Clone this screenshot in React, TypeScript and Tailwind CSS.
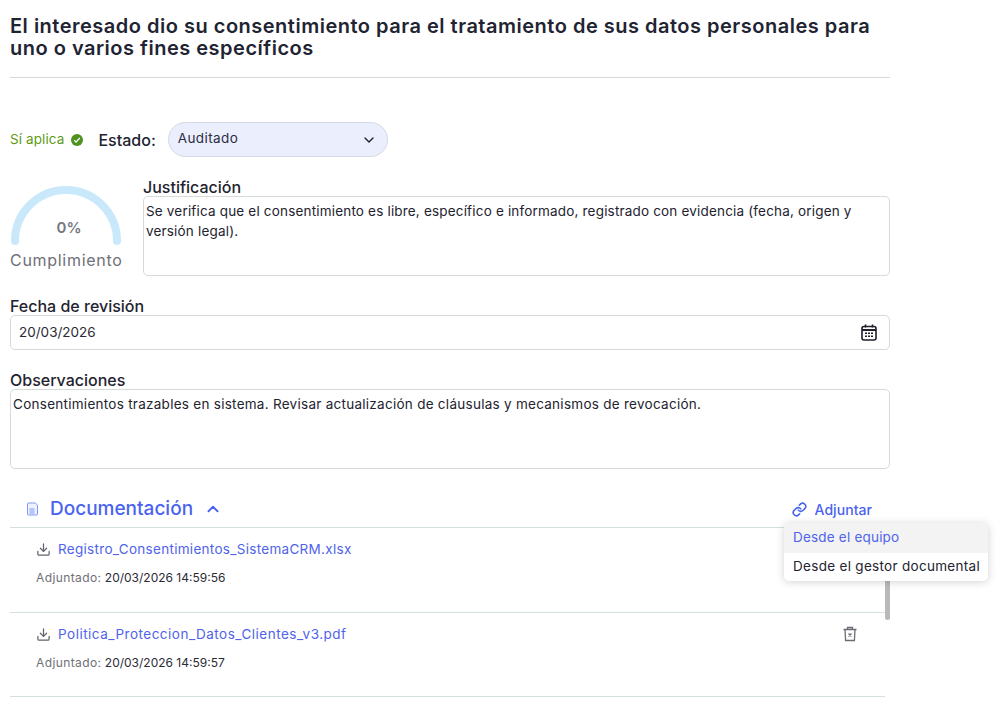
import React from "react";
import { ChevronDown, ChevronUp, Link, Download } from "lucide-react";

const font = "[font-family:Inter,'Liberation_Sans',sans-serif]";

function Trash() {
  return (
    <svg width="16" height="16" viewBox="0 0 16 16" fill="none" stroke="#6b6b76" strokeWidth="1.3">
      <path d="M1.5 3.5h13M5.5 3.5V1.5h5v2M3 3.5l.6 11h8.8l.6-11" />
      <path d="M6.5 7.5l3 3M9.5 7.5l-3 3" />
    </svg>
  );
}

function DocIcon() {
  return (
    <svg width="14" height="14" viewBox="0 0 14 14" fill="none" stroke="#7f97f5" strokeWidth="1">
      <path d="M3.5 1h6.7L12.5 3v9a1 1 0 0 1-1 1h-8a1 1 0 0 1-1-1V2a1 1 0 0 1 1-1z" fill="#eef1fe" />
      <path d="M4.5 7h5M4.5 9h5M4.5 11h5" />
    </svg>
  );
}

function CalendarIcon() {
  return (
    <svg width="16" height="17" viewBox="0 0 16 17" fill="none">
      <rect x="1" y="2.5" width="14" height="13.5" rx="2" stroke="#1f1f2c" strokeWidth="1.6" />
      <path d="M1 6h14" stroke="#1f1f2c" strokeWidth="2" />
      <path d="M4.5 0.5v3M11.5 0.5v3" stroke="#1f1f2c" strokeWidth="1.6" />
      <path d="M4 8.5h2v1.5H4zM7 8.5h2v1.5H7zM10 8.5h2v1.5h-2zM4 11.5h2V13H4zM7 11.5h2V13H7zM10 11.5h2V13h-2z" fill="#1f1f2c" />
    </svg>
  );
}

function Gauge() {
  return (
    <svg width="112" height="62" viewBox="0 0 112 62" fill="none" className="block">
      <path d="M5 55 A51 51 0 0 1 107 55" stroke="#c9e9fb" strokeWidth="8" strokeLinecap="round" />
    </svg>
  );
}

function Doc({ name, date, nameClass, rowClass }: { name: string; date: string; nameClass: string; rowClass: string }) {
  return (
    <div className={`border-b border-[#d5dfdc] pl-[26px] pr-[27px] pt-[11px] flex justify-between ${rowClass}`}>
      <div>
        <div className="flex items-center gap-[7px] h-[20px]">
          <Download size={15} color="#63636e" strokeWidth={2} />
          <span className={`text-[13.5px] text-[#4f63ea] ${nameClass}`}>{name}</span>
        </div>
        <div className="mt-[9px] text-[12px] leading-[20px] text-[#6f6f78]">
          <span className="tracking-[0.4px]">Adjuntado:</span> <span className="text-[#2b2b36]">{date}</span>
        </div>
      </div>
      <div className="pt-[2px]"><Trash /></div>
    </div>
  );
}

export default function App() {
  return (
    <div className={`relative w-[996px] h-[701px] overflow-hidden bg-white text-[#23232f] ${font}`}>
      <div className="w-[880px] ml-[10px] pt-[15px]">
        <h1 className="text-[20px] leading-[22px] font-semibold text-[#1f2433] tracking-[0.5px] pb-[18px] border-b border-[#d5dbd9]">
          El interesado dio su consentimiento para el tratamiento de sus datos personales para uno o varios fines específicos
        </h1>

        <div className="flex items-center mt-[44px] h-[35px]">
          <span className="text-[13.5px] tracking-[0.1px] text-[#5e9a17]">Sí aplica</span>
          <span className="ml-[7px] w-[12px] h-[12px] rounded-full bg-[#4f931f] flex items-center justify-center">
            <svg width="8" height="8" viewBox="0 0 8 8" fill="none" stroke="#fff" strokeWidth="1.3"><path d="M1.2 4.2l1.9 1.8 3.7-4" /></svg>
          </span>
          <span className="ml-[15px] text-[16px] font-medium">Estado:</span>
          <div className="ml-[12px] w-[220px] h-[35px] rounded-full bg-[#ebeffd] border border-[#d2d9e4] pl-[9px] pr-[10px] flex items-center justify-between">
            <span className="text-[13.5px] -mt-[2px] tracking-[0.4px] text-[#2c2c44]">Auditado</span>
            <ChevronDown size={16} color="#1f1f2c" strokeWidth={2} />
          </div>
        </div>

        <div className="flex mt-[29px] h-[90px]">
          <div className="relative w-[112px] shrink-0 pt-[1px] -mt-[1px]">
            <Gauge />
            <span className="absolute left-[6px] right-0 top-[32px] text-center text-[15px] font-semibold text-[#77777f]">0%</span>
            <div className="absolute left-0 right-0 top-[65px] text-center text-[16px] tracking-[0.7px] leading-[20px] text-[#6f6f78] whitespace-nowrap">Cumplimiento</div>
          </div>
          <div className="ml-[21px] flex-1">
            <div className="text-[16px] leading-[18px] font-medium -mt-[8px] h-[18px]">Justificación</div>
            <div className="h-[80px] rounded-[5px] border border-[#d5dbd9] px-[2px] pt-[4px] text-[13.5px] leading-[20px] tracking-[0.18px]">
              Se verifica que el consentimiento es libre, específico e informado, registrado con evidencia (fecha, origen y versión legal).
            </div>
          </div>
        </div>

        <div className="text-[16px] leading-[18px] font-medium mt-[21px]">Fecha de revisión</div>
        <div className="h-[35px] rounded-[5px] border border-[#d5dbd9] pl-[8px] pr-[12px] pb-[1px] flex items-center justify-between text-[13.5px] text-[#2b2b36]">
          <span>20/03/2026</span>
          <CalendarIcon />
        </div>

        <div className="text-[16px] leading-[18px] font-medium mt-[21px]">Observaciones</div>
        <div className="h-[80px] rounded-[5px] border border-[#d5dbd9] px-[2px] pt-[4px] text-[13.5px] leading-[20px] tracking-[0.27px]">
          Consentimientos trazables en sistema. Revisar actualización de cláusulas y mecanismos de revocación.
        </div>

        <div className="w-[875px] mt-[20px]">
          <div className="h-[39px] border-b border-[#d5dfdc] flex items-center pl-[15px] pr-[13px] pt-[2px]">
            <DocIcon />
            <span className="ml-[11px] text-[19px] font-medium text-[#4a63ee]">Documentación</span>
            <ChevronUp size={18} color="#4a63ee" strokeWidth={2.5} className="ml-[11px]" />
            <div className="ml-auto flex items-center gap-[8px] text-[#4a63ee]">
              <Link size={15} strokeWidth={2.5} />
              <span className="text-[14px] tracking-[0.05px] font-medium">Adjuntar</span>
            </div>
          </div>
          <Doc name="Registro_Consentimientos_SistemaCRM.xlsx" date="20/03/2026 14:59:56" nameClass="tracking-[0.3px]" rowClass="h-[85px]" />
          <Doc name="Politica_Proteccion_Datos_Clientes_v3.pdf" date="20/03/2026 14:59:57" nameClass="tracking-[0.5px]" rowClass="h-[84px]" />
        </div>
      </div>

      <div className="absolute left-[885px] top-[570px] w-[5px] h-[50px] rounded-full bg-[#b9b9b9]" />

      <div className="absolute left-[784px] top-[523px] w-[204px] rounded-[5px] bg-white shadow-[0_1px_8px_rgba(0,0,0,0.18)] overflow-hidden text-[13.5px]">
        <div className="h-[30px] bg-[#f3f3f4] flex items-center pl-[9px] pb-[1px] text-[#4f63ea] tracking-[0.2px]">Desde el equipo</div>
        <div className="h-[28px] flex items-center pl-[9px] pb-[1px] whitespace-nowrap tracking-[0.3px]">Desde el gestor documental</div>
      </div>
    </div>
  );
}
